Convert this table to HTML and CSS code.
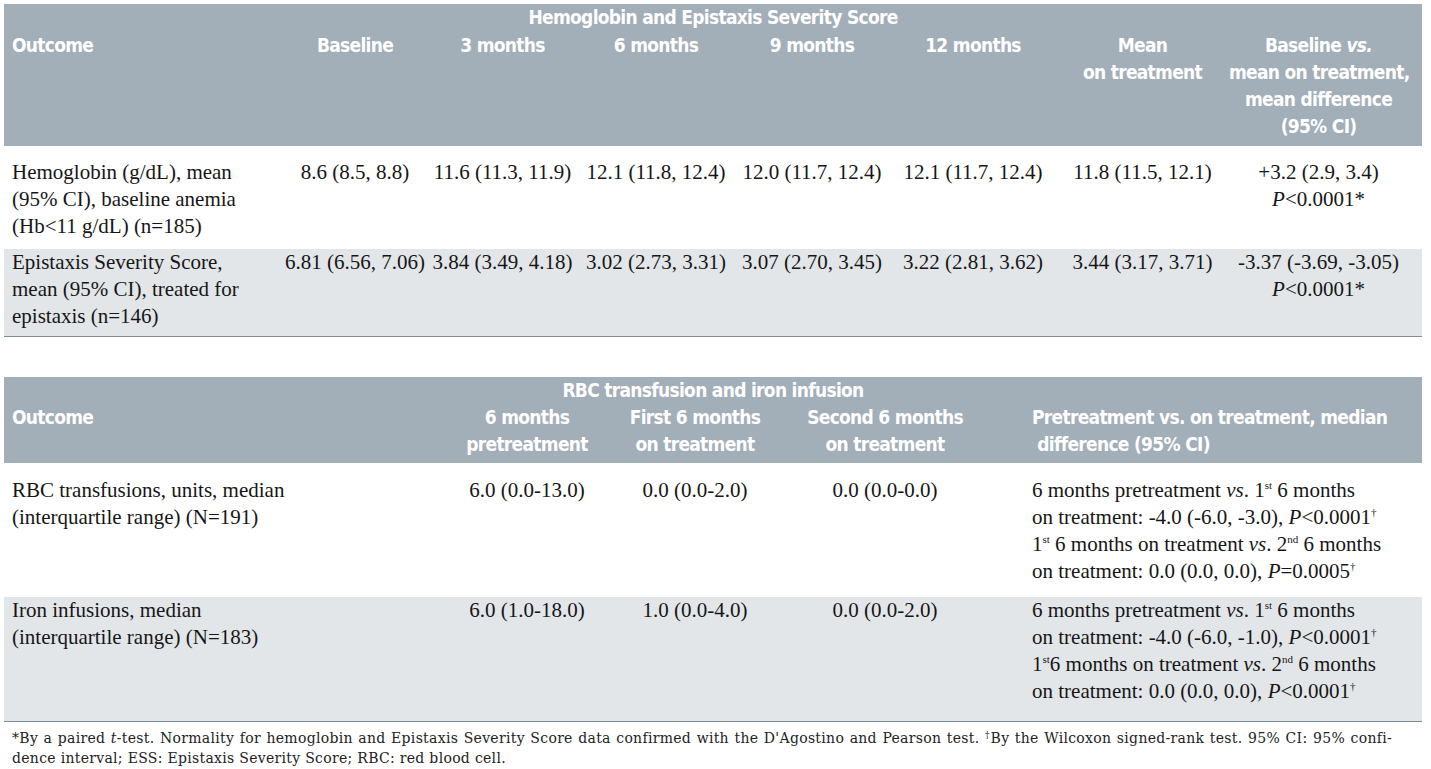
FILE: index.html
```html
<!DOCTYPE html>
<html>
<head>
<meta charset="utf-8">
<link rel="stylesheet" href="styles.css">
</head>
<body>
<div class="page">
  <table class="tbl tbl-hb">
    <colgroup>
      <col class="c-out1"><col class="c-base"><col class="c-3m"><col class="c-6m"><col class="c-9m"><col class="c-12m"><col class="c-mean"><col class="c-diff">
    </colgroup>
    <thead>
      <tr class="title-row"><th colspan="8" class="title">Hemoglobin and Epistaxis Severity Score</th></tr>
      <tr class="head-row">
        <th class="outcome">Outcome</th>
        <th>Baseline</th>
        <th>3 months</th>
        <th>6 months</th>
        <th>9 months</th>
        <th>12 months</th>
        <th>Mean<br>on treatment</th>
        <th class="diff-head">Baseline <i>vs.</i><br>mean on treatment,<br>mean difference<br>(95% CI)</th>
      </tr>
    </thead>
    <tbody>
      <tr class="row-a">
        <td class="label">Hemoglobin (g/dL), mean<br>(95% CI), baseline anemia<br>(Hb&lt;11 g/dL) (n=185)</td>
        <td class="num">8.6 (8.5, 8.8)</td>
        <td class="num">11.6 (11.3, 11.9)</td>
        <td class="num">12.1 (11.8, 12.4)</td>
        <td class="num">12.0 (11.7, 12.4)</td>
        <td class="num">12.1 (11.7, 12.4)</td>
        <td class="num">11.8 (11.5, 12.1)</td>
        <td class="num diff">+3.2 (2.9, 3.4)<br><i>P</i>&lt;0.0001*</td>
      </tr>
      <tr class="row-b">
        <td class="label">Epistaxis Severity Score,<br>mean (95% CI), treated for<br>epistaxis (n=146)</td>
        <td class="num">6.81 (6.56, 7.06)</td>
        <td class="num">3.84 (3.49, 4.18)</td>
        <td class="num">3.02 (2.73, 3.31)</td>
        <td class="num">3.07 (2.70, 3.45)</td>
        <td class="num">3.22 (2.81, 3.62)</td>
        <td class="num">3.44 (3.17, 3.71)</td>
        <td class="num diff">-3.37 (-3.69, -3.05)<br><i>P</i>&lt;0.0001*</td>
      </tr>
    </tbody>
  </table>

  <table class="tbl tbl-rbc">
    <colgroup>
      <col class="c-out2"><col class="c-pre"><col class="c-first"><col class="c-second"><col class="c-med">
    </colgroup>
    <thead>
      <tr class="title-row"><th colspan="5" class="title">RBC transfusion and iron infusion</th></tr>
      <tr class="head-row">
        <th class="outcome">Outcome</th>
        <th>6 months<br>pretreatment</th>
        <th>First 6 months<br>on treatment</th>
        <th>Second 6 months<br>on treatment</th>
        <th class="med-head">Pretreatment vs. on treatment, median<br>&nbsp;difference (95% CI)</th>
      </tr>
    </thead>
    <tbody>
      <tr class="row-c">
        <td class="label">RBC transfusions, units, median<br>(interquartile range) (N=191)</td>
        <td class="num">6.0 (0.0-13.0)</td>
        <td class="num">0.0 (0.0-2.0)</td>
        <td class="num">0.0 (0.0-0.0)</td>
        <td class="med">6 months pretreatment <i>vs</i>. 1<sup>st</sup> 6 months<br>on treatment: -4.0 (-6.0, -3.0), <i>P</i>&lt;0.0001<sup>†</sup><br>1<sup>st</sup> 6 months on treatment <i>vs</i>. 2<sup>nd</sup> 6 months<br>on treatment: 0.0 (0.0, 0.0), <i>P</i>=0.0005<sup>†</sup></td>
      </tr>
      <tr class="row-d">
        <td class="label">Iron infusions, median<br>(interquartile range) (N=183)</td>
        <td class="num">6.0 (1.0-18.0)</td>
        <td class="num">1.0 (0.0-4.0)</td>
        <td class="num">0.0 (0.0-2.0)</td>
        <td class="med">6 months pretreatment <i>vs</i>. 1<sup>st</sup> 6 months<br>on treatment: -4.0 (-6.0, -1.0), <i>P</i>&lt;0.0001<sup>†</sup><br>1<sup>st</sup>6 months on treatment <i>vs</i>. 2<sup>nd</sup> 6 months<br>on treatment: 0.0 (0.0, 0.0), <i>P</i>&lt;0.0001<sup>†</sup></td>
      </tr>
    </tbody>
  </table>

  <div class="foot">
    <div class="foot-line1">*By a paired <i>t</i>-test. Normality for hemoglobin and Epistaxis Severity Score data confirmed with the D'Agostino and Pearson test. <sup>†</sup>By the Wilcoxon signed-rank test. 95% CI: 95% confi-</div>
    <div class="foot-line2">dence interval; ESS: Epistaxis Severity Score; RBC: red blood cell.</div>
  </div>
</div>
</body>
</html>
```

FILE: styles.css
```css
html, body {
  margin: 0;
  padding: 0;
  background: #ffffff;
}

.page {
  padding: 4px 9px 0 4px;
  width: 1418px;
}

.tbl {
  width: 1418px;
  table-layout: fixed;
  border-collapse: collapse;
  font-family: "Liberation Serif", "Times New Roman", serif;
  font-size: 21px;
  line-height: 27px;
  color: #161616;
}

.tbl th {
  background: #a2aeb8;
  color: #ffffff;
  font-family: "DejaVu Sans Condensed", "Liberation Sans", sans-serif;
  font-weight: bold;
  font-size: 19px;
  letter-spacing: -0.7px;
  line-height: 27px;
  text-align: center;
  vertical-align: top;
  white-space: nowrap;
  padding: 0;
}

.tbl .title-row th {
  padding: 0;
  height: 27px;
}

.tbl .head-row th {
  padding-top: 1px;
  padding-bottom: 6px;
}

.tbl th.outcome {
  text-align: left;
  padding-left: 8px;
}

.tbl td {
  vertical-align: top;
  padding: 0;
}

.tbl td.label {
  padding-left: 8px;
  text-align: left;
  white-space: nowrap;
}

.tbl td.num {
  text-align: center;
  white-space: nowrap;
}

/* table 1 columns */
.c-out1 { width: 279px; }
.c-base { width: 144px; }
.c-3m { width: 151px; }
.c-6m { width: 156px; }
.c-9m { width: 156px; }
.c-12m { width: 166px; }
.c-mean { width: 173px; }
.c-diff { width: 193px; }

.tbl-hb th.diff-head,
.tbl-hb td.diff {
  padding-right: 14px;
}

.tbl-hb .row-a td {
  padding-top: 13px;
  padding-bottom: 9px;
}

.tbl-hb .row-b td {
  background: #e3e6e9;
  padding-top: 0;
  padding-bottom: 6px;
  border-bottom: 1px solid #7f8e9a;
}

/* table 2 */
.tbl-rbc {
  margin-top: 40px;
}

.c-out2 { width: 440px; }
.c-pre { width: 166px; }
.c-first { width: 170px; }
.c-second { width: 210px; }
.c-med { width: 432px; }

.tbl-rbc th.med-head {
  text-align: left;
  padding-left: 42px;
}

.tbl-rbc td.med {
  padding-left: 42px;
  text-align: left;
  white-space: nowrap;
}

.tbl-rbc .head-row th {
  padding-top: 0;
  padding-bottom: 5px;
}

.tbl-rbc .row-c td {
  padding-top: 14px;
  padding-bottom: 12px;
}

.tbl-rbc .row-d td {
  background: #e3e6e9;
  padding-top: 0;
  padding-bottom: 16px;
  border-bottom: 1px solid #7f8e9a;
}

.tbl sup {
  font-size: 11px;
  line-height: 0;
  vertical-align: 8px;
}

/* footnote */
.foot {
  margin-top: 6px;
  padding-left: 8px;
  width: 1380px;
  font-family: "DejaVu Serif", serif;
  font-size: 14px;
  letter-spacing: 0.3px;
  line-height: 20px;
  color: #222222;
}

.foot-line1 {
  white-space: nowrap;
  text-align: justify;
  text-align-last: justify;
}

.foot sup {
  font-size: 9px;
  line-height: 0;
  vertical-align: 5px;
}
```
